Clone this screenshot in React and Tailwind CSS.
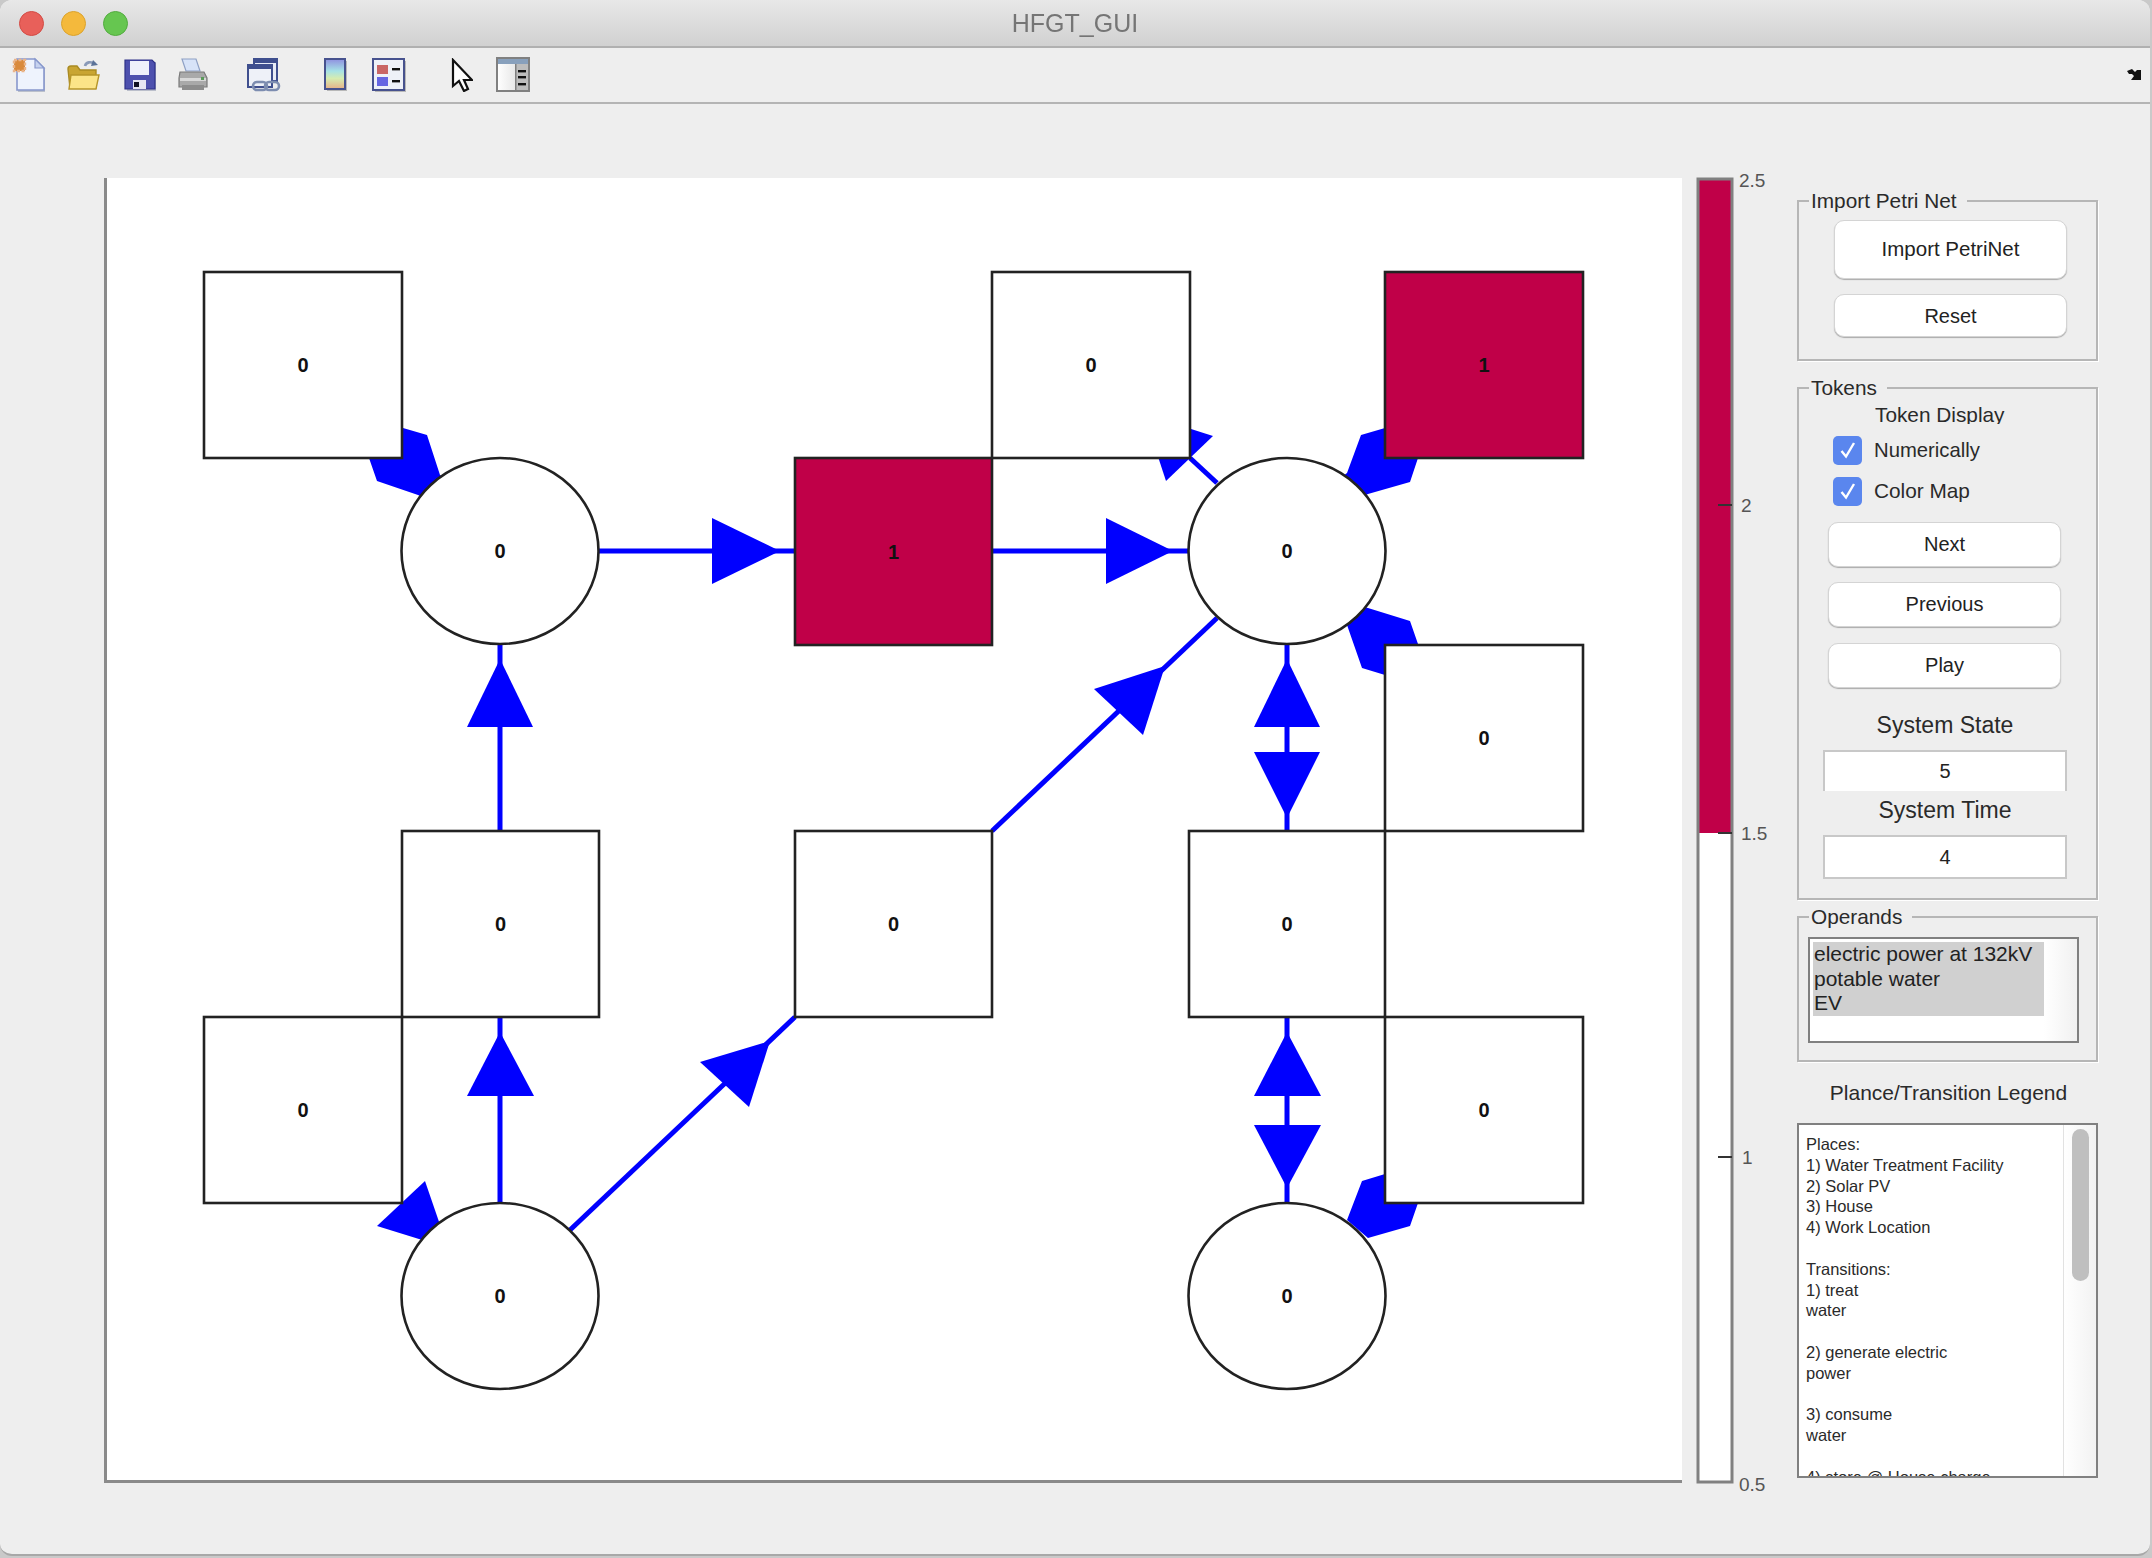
import React from "react";

const font = { fontFamily: '"Liberation Sans", Arial, sans-serif' };

const squares = [
  { x: 204, y: 272, w: 198, h: 186, v: 0 },
  { x: 795, y: 458, w: 197, h: 187, v: 1, red: true },
  { x: 992, y: 272, w: 198, h: 186, v: 0 },
  { x: 1385, y: 272, w: 198, h: 186, v: 1, red: true },
  { x: 1385, y: 645, w: 198, h: 186, v: 0 },
  { x: 402, y: 831, w: 197, h: 186, v: 0 },
  { x: 795, y: 831, w: 197, h: 186, v: 0 },
  { x: 1189, y: 831, w: 196, h: 186, v: 0 },
  { x: 204, y: 1017, w: 198, h: 186, v: 0 },
  { x: 1385, y: 1017, w: 198, h: 186, v: 0 },
];

const circles = [
  [500, 551],
  [1287, 551],
  [500, 1296],
  [1287, 1296],
];

const lines = [
  [598, 551, 795, 551],
  [992, 551, 1189, 551],
  [500, 645, 500, 831],
  [500, 1017, 500, 1203],
  [1287, 645, 1287, 831],
  [1287, 1017, 1287, 1203],
  [992, 831, 1217, 618],
  [570, 1230, 795, 1017],
  [1190, 458, 1217, 483],
];

const heads = [
  "712,518 712,584 780,551",
  "1106,518 1106,584 1173,551",
  "467,727 533,727 500,659",
  "467,1096 534,1096 500,1032",
  "1254,727 1320,727 1287,659",
  "1254,752 1320,752 1287,818",
  "1254,1096 1321,1096 1287,1032",
  "1254,1125 1321,1125 1287,1188",
  "1094,689 1143,735 1165,666",
  "700,1062 749,1107 770,1041",
  "1213,436 1166,481 1144,414",
  "425,1181 377,1226 448,1248",
  "369,458 377,481 418,495 450,510 460,490 440,475 427,435 403,428 380,440",
  "1418,458 1410,482 1368,494 1335,510 1325,490 1347,473 1361,435 1385,428 1405,440",
  "1368,608 1410,621 1418,644 1400,660 1385,675 1362,668 1347,625 1335,600",
  "1385,1174 1362,1181 1347,1220 1368,1238 1410,1226 1418,1203 1400,1190",
];

const Diagram = () => (
  <svg viewBox="107 178 1575 1302" className="block h-[1302px] w-[1575px] bg-white">
    {lines.map(([x1, y1, x2, y2], i) => (
      <line key={i} x1={x1} y1={y1} x2={x2} y2={y2} stroke="#0000ff" strokeWidth="5" />
    ))}
    {heads.map((p, i) => (
      <polygon key={i} points={p} fill="#0000ff" />
    ))}
    {squares.map((s, i) => (
      <g key={i}>
        <rect x={s.x} y={s.y} width={s.w} height={s.h} fill={s.red ? "#c00048" : "#ffffff"} stroke="#222222" strokeWidth="2.6" />
        <text x={s.x + s.w / 2} y={s.y + s.h / 2 + 7} textAnchor="middle" fontSize="20" fontWeight="700" fill="#111111" style={font}>
          {s.v}
        </text>
      </g>
    ))}
    {circles.map(([cx, cy], i) => (
      <g key={i}>
        <ellipse cx={cx} cy={cy} rx="98.5" ry="93" fill="#ffffff" stroke="#222222" strokeWidth="2.6" />
        <text x={cx} y={cy + 7} textAnchor="middle" fontSize="20" fontWeight="700" fill="#111111" style={font}>
          0
        </text>
      </g>
    ))}
  </svg>
);

const ticks = [
  { y: 505, label: "2", x: 1741 },
  { y: 833, label: "1.5", x: 1741 },
  { y: 1157, label: "1", x: 1742 },
];

const ColorBar = () => (
  <svg viewBox="1690 170 90 1330" className="mt-[66px] ml-[8px] block h-[1330px] w-[90px] shrink-0">
    <rect x="1698" y="179" width="34" height="1303" fill="#ffffff" />
    <rect x="1698" y="179" width="34" height="654" fill="#c00048" />
    <rect x="1698" y="179" width="34" height="1303" fill="none" stroke="#808080" strokeWidth="3" />
    {ticks.map((t) => (
      <g key={t.label}>
        <line x1="1718" y1={t.y} x2="1732" y2={t.y} stroke="#333333" strokeWidth="2" />
        <text x={t.x} y={t.y + 7} fontSize="19" fill="#555555" style={font}>
          {t.label}
        </text>
      </g>
    ))}
    <text x="1739" y="187" fontSize="19" fill="#555555" style={font}>
      2.5
    </text>
    <text x="1739" y="1491" fontSize="19" fill="#555555" style={font}>
      0.5
    </text>
  </svg>
);

const Btn = ({ className, children }) => (
  <button
    type="button"
    className={`block rounded-[10px] border border-[#d4d4d4] bg-white text-[20px] text-[#222] shadow-[0_1px_1px_#aaa] ${className}`}
  >
    {children}
  </button>
);

const Check = () => (
  <span className="flex h-[29px] w-[29px] items-center justify-center rounded-[5px] bg-[#5a86ee]">
    <svg viewBox="0 0 24 24" className="h-[24px] w-[24px]" fill="none" stroke="#ffffff" strokeWidth="2.4">
      <path d="M5.5 13l4.5 5.5L18 5" />
    </svg>
  </span>
);

const Group = ({ title, className, children }) => (
  <fieldset className={`w-[301px] border-2 border-[#b6b6b6] shadow-[1px_1px_0_#ffffff] ${className}`}>
    <legend className="ml-[10px] px-[2px] pr-[10px] text-[20.8px] leading-[22px] text-[#2a2a2a]">{title}</legend>
    {children}
  </fieldset>
);

const legendLines = [
  "Places:",
  "1) Water Treatment Facility",
  "2) Solar PV",
  "3) House",
  "4) Work Location",
  "",
  "Transitions:",
  "1) treat",
  "water",
  "",
  "2) generate electric",
  "power",
  "",
  "3) consume",
  "water",
  "",
  "4) store @ House charge",
];

const Panel = () => (
  <div className="mt-[86px] ml-[17px] w-[301px] shrink-0">
    <Group title="Import Petri Net" className="h-[171px]">
      <Btn className="mt-[8px] ml-[35px] h-[59px] w-[233px] !text-[20.5px]">Import PetriNet</Btn>
      <Btn className="mt-[15px] ml-[35px] h-[43px] w-[233px]">Reset</Btn>
    </Group>

    <Group title="Tokens" className="mt-[16px] h-[523px]">
      <div className="mt-[3px] ml-[76px] h-[22px] overflow-hidden text-[20.8px] leading-[26px] text-[#2a2a2a]">Token Display</div>
      <div className="mt-[11px] ml-[34px] flex items-center gap-[12px] text-[20.3px] text-[#2a2a2a]">
        <Check />
        Numerically
      </div>
      <div className="mt-[10px] ml-[34px] flex items-center gap-[12px] text-[20.8px] text-[#2a2a2a]">
        <Check />
        Color Map
      </div>
      <Btn className="mt-[15px] ml-[29px] h-[45px] w-[233px]">Next</Btn>
      <Btn className="mt-[15px] ml-[29px] h-[45px] w-[233px]">Previous</Btn>
      <Btn className="mt-[16px] ml-[29px] h-[45px] w-[233px]">Play</Btn>
      <div className="mt-[23px] ml-[24px] w-[244px] text-center text-[23px] leading-[28px] text-[#2a2a2a]">System State</div>
      <div className="mt-[11px] ml-[24px] flex h-[41px] w-[244px] items-center justify-center border-x-2 border-t-2 border-[#c8c8c8] bg-white text-[20px] text-[#222]">
        5
      </div>
      <div className="mt-[5px] ml-[24px] w-[244px] text-center text-[23px] leading-[28px] text-[#2a2a2a]">System Time</div>
      <div className="mt-[11px] ml-[24px] flex h-[44px] w-[244px] items-center justify-center border-2 border-[#c8c8c8] bg-white text-[20px] text-[#222]">
        4
      </div>
    </Group>

    <Group title="Operands" className="mt-[6px] h-[156px]">
      <div className="mt-[9px] ml-[9px] flex h-[106px] w-[271px] border-2 border-[#808080] bg-white pt-[3px] pl-[3px]">
        <div className="h-[74px] w-[231px] bg-[#d0d0d0] pl-[1px] text-[21px] leading-[24.7px] text-[#222]">
          <div>electric power at 132kV</div>
          <div>potable water</div>
          <div>EV</div>
        </div>
        <div className="-mt-[3px] flex-1 bg-gradient-to-r from-white to-[#f1f1f1]" />
      </div>
    </Group>

    <div className="mt-[17px] ml-[2px] text-center text-[21px] leading-[28px] text-[#2a2a2a]">Plance/Transition Legend</div>

    <div className="mt-[16px] flex h-[355px] w-[301px] overflow-hidden border-2 border-[#808080] bg-white">
      <div className="w-[264px] pt-[9px] pl-[7px] text-[16.5px] leading-[20.8px] text-[#2a2a2a]">
        {legendLines.map((l, i) => (
          <div key={i} className="h-[20.8px] whitespace-nowrap">
            {l}
          </div>
        ))}
      </div>
      <div className="flex-1 border-l border-[#e2e2e2] bg-gradient-to-r from-white to-[#f2f2f2] pt-[4px] pl-[8px]">
        <div className="h-[152px] w-[17px] rounded-full bg-[#bfbfbf]" />
      </div>
    </div>
  </div>
);

const IconNew = () => (
  <svg viewBox="0 0 36 36" className="ml-[11px] h-[36px] w-[36px]">
    <path d="M7 3h18l9 9v23H7z" fill="#9aa2b4" opacity="0.6" />
    <path d="M6 2h18l9 9v22H6z" fill="#eef3fd" stroke="#8797cc" strokeWidth="1.6" />
    <path d="M24 2v9h9z" fill="#c6d2ef" stroke="#8797cc" strokeWidth="1.2" />
    <rect x="3" y="3" width="11" height="11" fill="#d98a3c" stroke="#e9b48a" strokeWidth="2.4" strokeDasharray="3 1.5" />
  </svg>
);

const IconOpen = () => (
  <svg viewBox="0 0 34 34" className="ml-[19px] h-[34px] w-[34px]">
    <path d="M19 8c1-4 6-5 10-2" fill="none" stroke="#8a9ab8" strokeWidth="2.6" />
    <path d="M27 2l5 5-7 1z" fill="#5c7398" />
    <path d="M2 11c0-2 1-3 3-3h6l3 4h16v18H4z" fill="#c9a532" stroke="#a98a22" strokeWidth="1.4" />
    <path d="M3 31l2-14h28l-3 14z" fill="#fbe488" stroke="#b6952a" strokeWidth="1.4" />
  </svg>
);

const IconSave = () => (
  <svg viewBox="0 0 32 32" className="ml-[24px] h-[32px] w-[32px]">
    <rect x="3" y="3" width="29" height="29" fill="#9aa0b4" opacity="0.6" />
    <path d="M1 1h27l3 3v26H1z" fill="#4d50ae" stroke="#2e3188" strokeWidth="1.2" />
    <path d="M6 2h19v14H6z" fill="#eef0fb" />
    <rect x="9" y="21" width="13" height="9" fill="#e6e6f3" />
    <rect x="10" y="23" width="5" height="5" fill="#111122" />
  </svg>
);

const IconPrint = () => (
  <svg viewBox="0 0 32 36" className="ml-[21px] h-[36px] w-[32px]">
    <path d="M5 2l14 0 4 12H9z" fill="#d7e3f8" stroke="#8ea0c4" strokeWidth="1.2" />
    <path d="M3 15h24l3 6v9H2v-9z" fill="#a9a9a9" stroke="#7a7a7a" strokeWidth="1.2" />
    <path d="M3 21h26v3H3z" fill="#d8d8d8" />
    <path d="M5 28h22v5H5z" fill="#8d8d8d" />
    <rect x="24" y="20" width="3" height="3" fill="#5a9a5a" />
  </svg>
);

const IconLink = () => (
  <svg viewBox="0 0 34 36" className="ml-[38px] h-[36px] w-[34px]">
    <rect x="7" y="2" width="23" height="22" fill="#e8ecf6" stroke="#3f4f8e" strokeWidth="2" />
    <rect x="7" y="2" width="23" height="4" fill="#3f4f8e" />
    <rect x="1" y="8" width="24" height="22" fill="#eef1f8" stroke="#3f4f8e" strokeWidth="2" />
    <rect x="1" y="8" width="24" height="4" fill="#3f4f8e" />
    <rect x="6" y="25" width="14" height="8" rx="4" fill="none" stroke="#7d8db0" strokeWidth="2.6" />
    <rect x="18" y="25" width="14" height="8" rx="4" fill="none" stroke="#7d8db0" strokeWidth="2.6" />
  </svg>
);

const IconColorbar = () => (
  <svg viewBox="0 0 24 34" className="ml-[43px] h-[34px] w-[24px]">
    <defs>
      <linearGradient id="cb" x1="0" y1="0" x2="0" y2="1">
        <stop offset="0" stopColor="#8f8fe0" />
        <stop offset="0.4" stopColor="#a6e2e6" />
        <stop offset="0.65" stopColor="#d6ecb0" />
        <stop offset="1" stopColor="#e6b088" />
      </linearGradient>
    </defs>
    <rect x="3" y="3" width="20" height="30" fill="#b8b8b8" />
    <rect x="1" y="1" width="20" height="30" fill="url(#cb)" stroke="#47528e" strokeWidth="2" />
  </svg>
);

const IconLegend = () => (
  <svg viewBox="0 0 34 34" className="ml-[24px] h-[34px] w-[34px]">
    <rect x="3" y="3" width="31" height="31" fill="#b8b8b8" />
    <rect x="1" y="1" width="31" height="31" fill="#eef1f8" stroke="#47528e" strokeWidth="2" />
    <rect x="5" y="7" width="11" height="9" fill="#c96666" />
    <rect x="5" y="19" width="11" height="9" fill="#6666e2" />
    <rect x="20" y="10" width="8" height="2.4" fill="#111111" />
    <rect x="20" y="22" width="8" height="2.4" fill="#111111" />
  </svg>
);

const IconCursor = () => (
  <svg viewBox="0 0 22 34" className="ml-[45px] h-[34px] w-[22px]">
    <path d="M2 2v26l6-5 5 10 4-2-4-9h8z" fill="#ffffff" stroke="#111111" strokeWidth="2.2" strokeLinejoin="miter" />
  </svg>
);

const IconPanel = () => (
  <svg viewBox="0 0 35 36" className="ml-[23px] h-[36px] w-[35px]">
    <defs>
      <linearGradient id="pl" x1="0" y1="0" x2="1" y2="0">
        <stop offset="0" stopColor="#ffffff" />
        <stop offset="1" stopColor="#d6d6d6" />
      </linearGradient>
    </defs>
    <rect x="1" y="1" width="32" height="33" fill="url(#pl)" stroke="#808080" strokeWidth="2" />
    <rect x="2" y="2" width="30" height="5" fill="#88a0bc" />
    <rect x="19" y="7" width="13" height="26" fill="#bdbdbd" />
    <rect x="19" y="7" width="1.5" height="26" fill="#808080" />
    <rect x="22" y="13" width="8" height="2.4" fill="#111111" />
    <rect x="22" y="19" width="8" height="2.4" fill="#111111" />
    <rect x="22" y="26" width="8" height="2.4" fill="#111111" />
  </svg>
);

export default function App() {
  return (
    <div className="h-[1558px] w-[2152px] overflow-hidden bg-[#c9c9c9]" style={font}>
      <div className="h-[1556px] w-[2150px] overflow-hidden rounded-[12px] border-b-2 border-[#a8a8a8] bg-[#eeeeee] blur-[0.5px]">
        <div className="relative flex h-[48px] items-center border-b-2 border-[#b0b0b0] bg-gradient-to-b from-[#e8e8e8] to-[#d1d1d1]">
          <div className="ml-[19px] flex gap-[17px]">
            <span className="h-[25px] w-[25px] rounded-full border border-[#d24b44] bg-[#e8605a]" />
            <span className="h-[25px] w-[25px] rounded-full border border-[#dba22c] bg-[#f4b93c]" />
            <span className="h-[25px] w-[25px] rounded-full border border-[#52ab3f] bg-[#66c650]" />
          </div>
          <div className="absolute inset-x-0 text-center text-[25px] leading-[46px] text-[#757575]">HFGT_GUI</div>
        </div>

        <div className="flex h-[56px] items-center border-b-2 border-[#b4b4b4]">
          <IconNew />
          <IconOpen />
          <IconSave />
          <IconPrint />
          <IconLink />
          <IconColorbar />
          <IconLegend />
          <IconCursor />
          <IconPanel />
          <svg viewBox="0 0 16 14" className="mr-[8px] ml-auto h-[14px] w-[16px]">
            <path d="M1 3L6 1L9 4L11 2L15 2V12H5L8 8L6 6L3 6Z" fill="#111111" />
          </svg>
        </div>

        <div className="flex items-start pl-[104px]">
          <div className="mt-[74px] w-[1578px] shrink-0 border-b-[3px] border-l-[3px] border-[#8a8a8a]">
            <Diagram />
          </div>
          <ColorBar />
          <Panel />
        </div>
      </div>
    </div>
  );
}
